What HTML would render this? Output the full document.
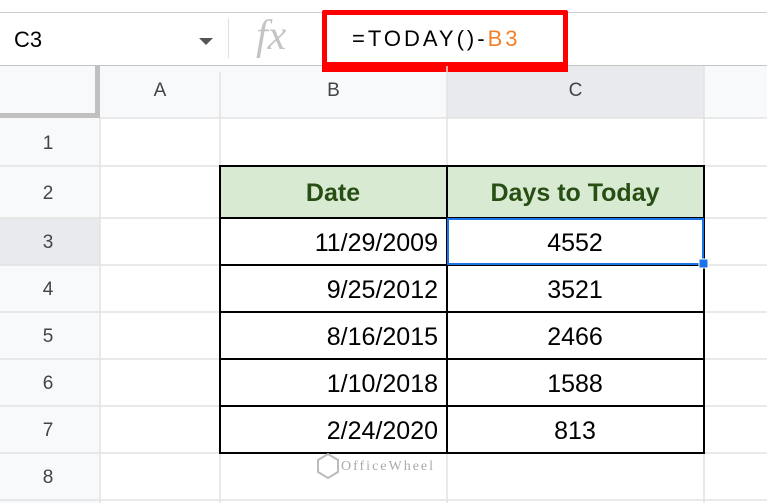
<!DOCTYPE html>
<html><head><style>
body{margin:0;width:767px;height:503px;overflow:hidden;background:#fff;font-family:"Liberation Sans",Arial,sans-serif;position:relative}
.a{position:absolute}
.h{background:#f8f9fa;color:#444;font-size:19px;text-align:center}
</style></head><body>
<div class="a" style="left:0;top:12px;width:767px;height:1px;background:#ccc"></div>
<div class="a" style="left:14px;top:27px;font-size:22px;color:#000">C3</div>
<div class="a" style="left:199px;top:38px;width:0;height:0;border-left:7px solid transparent;border-right:7px solid transparent;border-top:7px solid #555"></div>
<div class="a" style="left:228px;top:18px;width:1px;height:40px;background:#e0e0e0"></div>
<div class="a" style="left:256px;top:12px;font-family:'Liberation Serif',serif;font-style:italic;font-size:42px;color:#c4c4c4">fx</div>
<div class="a" style="left:352px;top:26px;font-family:'Liberation Sans Narrow','Liberation Sans',sans-serif;font-size:22px;color:#000;letter-spacing:3px">=TODAY()-<span style="color:#f4802a">B3</span></div>
<div class="a" style="left:322px;top:10px;width:236px;height:52px;border:5px solid #f00;border-radius:2px"></div>
<div class="a" style="left:0;top:65px;width:767px;height:1px;background:#c4c4c4"></div>
<div class="a h" style="left:0;top:66px;width:767px;height:52px"></div>
<div class="a" style="left:447px;top:66px;width:257px;height:52px;background:#e8eaed"></div>
<div class="a" style="left:0;top:113px;width:100px;height:5px;background:#c0c0c0"></div>
<div class="a" style="left:95px;top:66px;width:5px;height:52px;background:#c0c0c0"></div>
<div class="a h" style="left:100px;top:80px;width:120px;background:none">A</div>
<div class="a h" style="left:220px;top:80px;width:227px;background:none">B</div>
<div class="a h" style="left:447px;top:80px;width:257px;background:none">C</div>
<div class="a" style="left:0;top:118px;width:100px;height:385px;background:#f8f9fa"></div>
<div class="a" style="left:0;top:218px;width:100px;height:47px;background:#e8eaed"></div>
<div class="a" style="left:322px;top:62px;width:246px;height:10px;background:#f00"></div>
<svg class="a" style="left:0;top:0" width="767" height="503">
<g stroke="#e2e2e2" stroke-width="1.5">
<line x1="220" y1="72" x2="220" y2="503"/><line x1="447" y1="66" x2="447" y2="503"/><line x1="704" y1="66" x2="704" y2="503"/><line x1="100" y1="118" x2="100" y2="503"/>
<line x1="0" y1="166" x2="767" y2="166"/><line x1="0" y1="218" x2="767" y2="218"/><line x1="0" y1="265" x2="767" y2="265"/><line x1="0" y1="312" x2="767" y2="312"/><line x1="0" y1="359" x2="767" y2="359"/><line x1="0" y1="406" x2="767" y2="406"/><line x1="0" y1="453" x2="767" y2="453"/><line x1="0" y1="500" x2="767" y2="500"/><line x1="100" y1="118" x2="767" y2="118"/>
</g>
<rect x="220" y="166" width="484" height="52" fill="#d9ead3"/>
<g stroke="#000" stroke-width="2" fill="none">
<rect x="220" y="166" width="484" height="287"/>
<line x1="447" y1="166" x2="447" y2="453"/>
<line x1="220" y1="218" x2="704" y2="218"/><line x1="220" y1="265" x2="704" y2="265"/><line x1="220" y1="312" x2="704" y2="312"/><line x1="220" y1="359" x2="704" y2="359"/><line x1="220" y1="406" x2="704" y2="406"/>
</g>
<rect x="448" y="219" width="255" height="45" fill="none" stroke="#1a73e8" stroke-width="2"/>
<rect x="699" y="259" width="9" height="9" fill="#1a73e8" stroke="#fff" stroke-width="1"/>
<g fill="#444" font-size="19" text-anchor="middle" font-family="Liberation Sans">
<text x="48" y="149">1</text><text x="48" y="199">2</text><text x="48" y="248">3</text><text x="48" y="295">4</text><text x="48" y="342">5</text><text x="48" y="389">6</text><text x="48" y="436">7</text><text x="48" y="483">8</text>
</g>
<g font-size="25" font-family="Liberation Sans" fill="#000">
<text x="333" y="201" text-anchor="middle" font-weight="bold" fill="#274e13">Date</text>
<text x="575" y="201" text-anchor="middle" font-weight="bold" fill="#274e13">Days to Today</text>
<g text-anchor="end"><text x="438" y="251">11/29/2009</text><text x="438" y="298">9/25/2012</text><text x="438" y="345">8/16/2015</text><text x="438" y="392">1/10/2018</text><text x="438" y="439">2/24/2020</text></g>
<g text-anchor="middle"><text x="575" y="251">4552</text><text x="575" y="298">3521</text><text x="575" y="345">2466</text><text x="575" y="392">1588</text><text x="575" y="439">813</text></g>
</g>
<path d="M318 460 l10 -6 l10 6 v12 l-10 6 l-10 -6z" fill="none" stroke="#bbb" stroke-width="2"/>
<text x="341" y="470" font-size="14" fill="#aaa" font-family="Liberation Serif" letter-spacing="2">OfficeWheel</text>
</svg>
</body></html>
